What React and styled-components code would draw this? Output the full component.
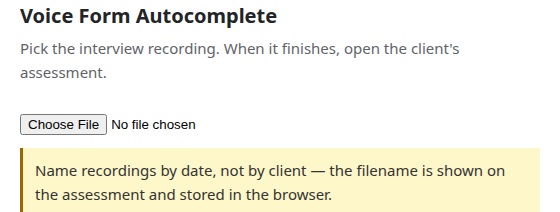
import React from "react";
import styled, { createGlobalStyle } from "styled-components";

const Global = createGlobalStyle`
  html, body { margin: 0; padding: 0; background: #fff; }
  body { font-family: "Noto Sans", "Open Sans", sans-serif; }
`;

const Page = styled.main`
  padding: 3px 20px 0 20px;
  width: 520px;
`;

const Title = styled.h1`
  margin: 0;
  font-size: 20px;
  line-height: 26px;
  font-weight: 700;
  color: #222428;
`;

const Lead = styled.p`
  margin: 7px 0 0 0;
  font-size: 15px;
  line-height: 24px;
  color: #5f6368;
`;

const FileRow = styled.div`
  margin-top: 30px;
  font-family: "Liberation Sans", Arial, sans-serif;
  font-size: 13.333px;
  input { font-family: "Liberation Sans", Arial, sans-serif; font-size: 13.333px; }
`;

const Note = styled.div`
  margin-top: 13px;
  background: #fef7c9;
  border-left: 3px solid #9a6700;
  padding: 10px 12px 20px 12px;
  font-size: 15px;
  line-height: 24px;
  color: #333;
`;

export default function App() {
  return (
    <>
      <Global />
      <Page>
        <Title>Voice Form Autocomplete</Title>
        <Lead>
          Pick the interview recording. When it finishes, open the client's
          assessment.
        </Lead>
        <FileRow>
          <input type="file" accept="audio/*" />
        </FileRow>
        <Note>
          Name recordings by date, not by client — the filename is shown on
          the assessment and stored in the browser.
        </Note>
      </Page>
    </>
  );
}
